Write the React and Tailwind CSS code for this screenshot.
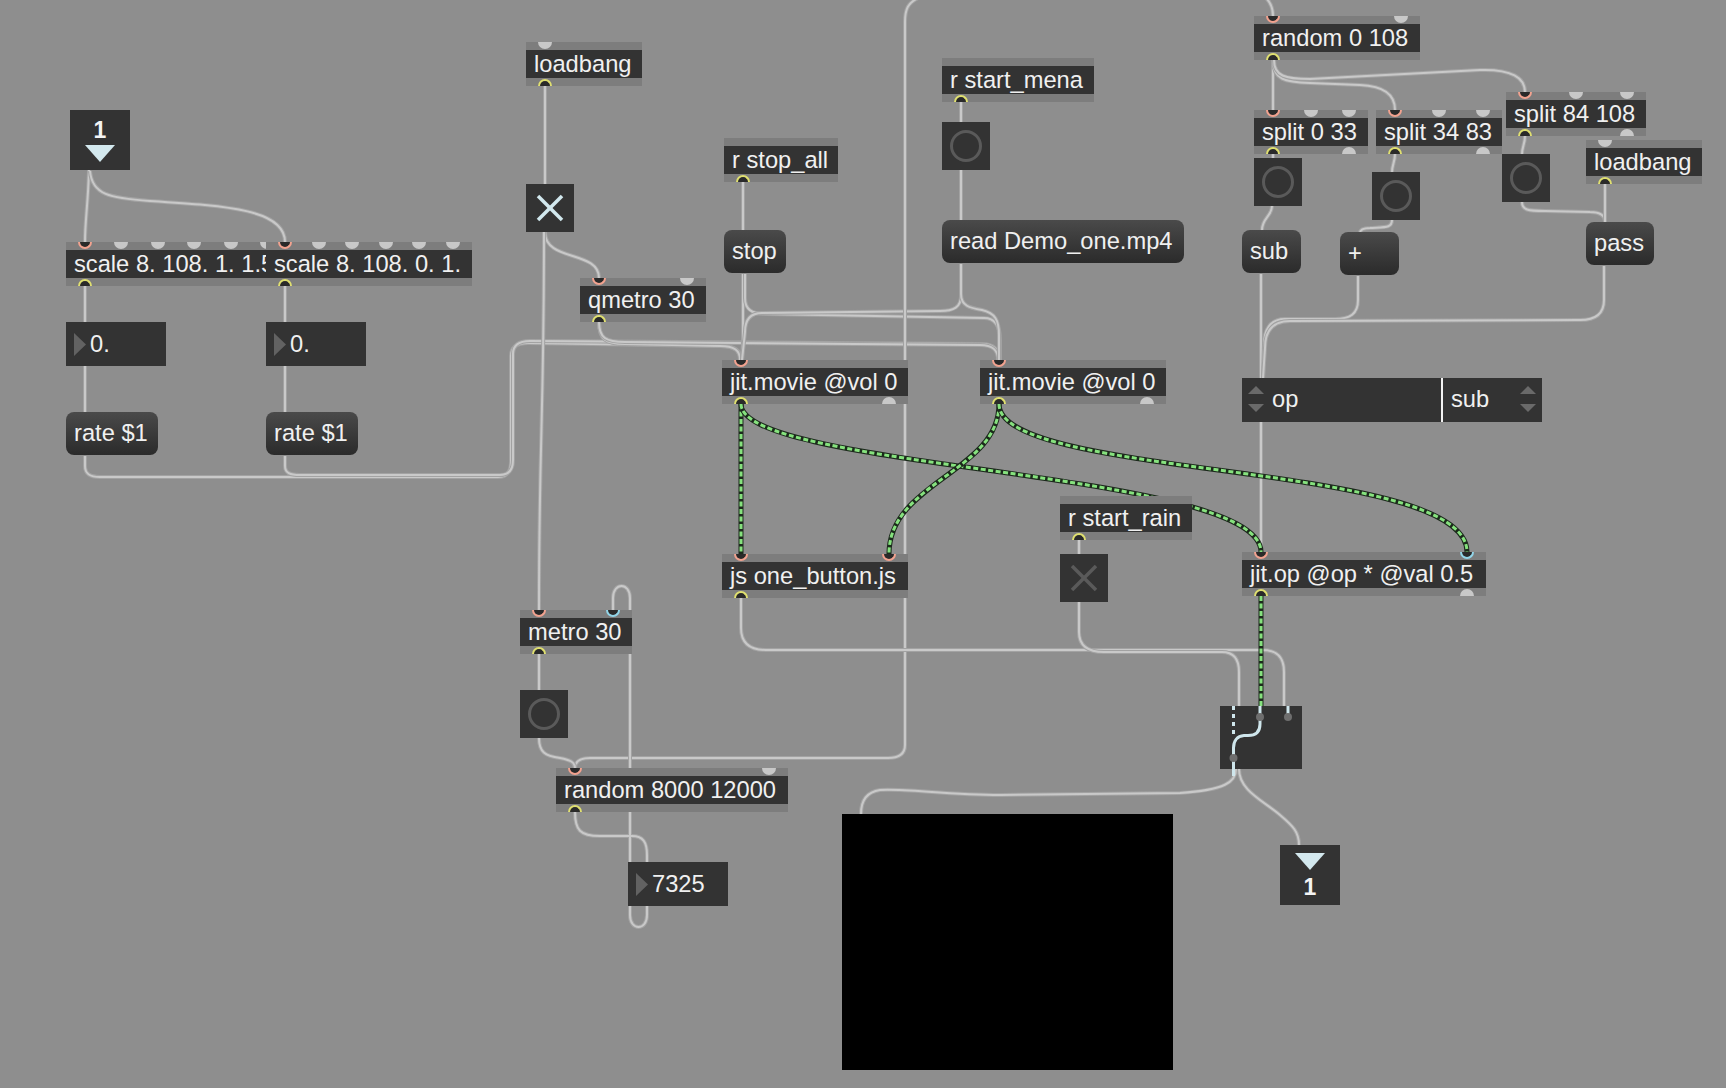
import React from "react";

const objects = [
  { t: "loadbang", x: 526, y: 42, w: 116, ins: ["g"], outs: ["y"] },
  { t: "qmetro 30", x: 580, y: 278, w: 126, ins: ["s", "g"], outs: ["y"] },
  { t: "r stop_all", x: 724, y: 138, w: 114, ins: [], outs: ["y"] },
  { t: "r start_mena", x: 942, y: 58, w: 152, ins: [], outs: ["y"] },
  { t: "random 0 108", x: 1254, y: 16, w: 166, ins: ["s", "g"], outs: ["y"] },
  { t: "split 0 33", x: 1254, y: 110, w: 114, ins: ["s", "g", "g"], outs: ["y", "g"] },
  { t: "split 34 83", x: 1376, y: 110, w: 126, ins: ["s", "g", "g"], outs: ["y", "g"] },
  { t: "split 84 108", x: 1506, y: 92, w: 140, ins: ["s", "g", "g"], outs: ["y", "g"] },
  { t: "loadbang", x: 1586, y: 140, w: 116, ins: ["g"], outs: ["y"] },
  { t: "scale 8. 108. 1. 1.5", x: 66, y: 242, w: 220, ins: ["s", "g", "g", "g", "g", "g"], outs: ["y"] },
  { t: "scale 8. 108. 0. 1.", x: 266, y: 242, w: 206, ins: ["s", "g", "g", "g", "g", "g"], outs: ["y"] },
  { t: "jit.movie @vol 0", x: 722, y: 360, w: 186, ins: ["s"], outs: ["y", "g"] },
  { t: "jit.movie @vol 0", x: 980, y: 360, w: 186, ins: ["s"], outs: ["y", "g"] },
  { t: "js one_button.js", x: 722, y: 554, w: 186, ins: ["s", "s"], outs: ["y"] },
  { t: "r start_rain", x: 1060, y: 496, w: 132, ins: [], outs: ["y"] },
  { t: "jit.op @op * @val 0.5", x: 1242, y: 552, w: 244, ins: ["s", "c"], outs: ["y", "g"] },
  { t: "metro 30", x: 520, y: 610, w: 112, ins: ["s", "c"], outs: ["y"] },
  { t: "random 8000 12000", x: 556, y: 768, w: 232, ins: ["s", "g"], outs: ["y"] },
];

const messages = [
  { t: "stop", x: 724, y: 230, w: 62 },
  { t: "read Demo_one.mp4", x: 942, y: 220, w: 242 },
  { t: "sub", x: 1242, y: 230, w: 59 },
  { t: "+", x: 1340, y: 232, w: 59 },
  { t: "pass", x: 1586, y: 222, w: 68 },
  { t: "rate $1", x: 66, y: 412, w: 92 },
  { t: "rate $1", x: 266, y: 412, w: 92 },
];

const numbers = [
  { t: "0.", x: 66, y: 322 },
  { t: "0.", x: 266, y: 322 },
  { t: "7325", x: 628, y: 862 },
];

const bangs = [
  { x: 942, y: 122 },
  { x: 1254, y: 158 },
  { x: 1372, y: 172 },
  { x: 1502, y: 154 },
  { x: 520, y: 690 },
];

const toggles = [
  { x: 526, y: 184, on: true },
  { x: 1060, y: 554, on: false },
];

const cords = [
  "M 89 170 C 88 205, 85 220, 85 242",
  "M 90 171 C 92 195, 110 198, 150 201 C 230 206, 285 210, 285 242",
  "M 85 286 L 85 322",
  "M 85 366 L 85 412",
  "M 285 286 L 285 322",
  "M 285 366 L 285 412",
  "M 85 456 L 85 466 C 85 474, 90 477, 100 477 L 498 477 C 507 477, 511 471, 511 462 L 511 356 C 511 347, 517 343, 528 343 L 722 346 C 735 346, 741 351, 741 360",
  "M 285 456 L 285 466 C 285 473, 290 475, 300 475 L 500 475 C 509 475, 513 469, 513 460 L 513 354 C 513 345, 519 341, 530 341 L 982 344 C 994 344, 999 350, 999 360",
  "M 545 86 L 545 184",
  "M 545 232 C 545 262, 599 250, 599 278",
  "M 544 232 C 544 420, 539 440, 539 610",
  "M 599 322 C 599 340, 606 344, 625 344 L 720 346 C 734 346, 740 350, 740 360",
  "M 599 322 C 599 338, 606 342, 625 342 L 980 345 C 993 345, 998 350, 998 360",
  "M 743 182 L 743 230",
  "M 743 274 L 743 340 C 743 350, 742 352, 742 360",
  "M 745 274 L 745 298 C 745 309, 751 314, 766 314 L 984 318 C 995 318, 1000 326, 1000 340 L 1000 360",
  "M 961 102 L 961 122",
  "M 961 170 L 961 220",
  "M 961 264 L 961 296 C 961 307, 954 311, 940 311 L 762 313 C 750 313, 745 320, 745 332 L 742 360",
  "M 961 264 L 961 294 C 961 306, 970 308, 982 310 C 995 313, 999 320, 999 335 L 999 360",
  "M 918 -2 C 908 3, 905 9, 905 22 L 905 745 C 905 754, 899 758, 888 758 L 590 758 C 580 758, 575 762, 575 768",
  "M 539 654 L 539 690",
  "M 539 738 C 539 752, 545 756, 560 758 C 570 760, 575 762, 575 768",
  "M 575 812 C 575 830, 580 836, 600 836 L 632 836 C 643 836, 647 842, 647 855 L 647 915 C 647 931, 630 931, 630 915 L 630 598 C 630 582, 613 582, 613 598 L 613 610",
  "M 741 598 L 741 628 C 741 643, 750 650, 766 650 L 1262 650 C 1276 650, 1284 656, 1284 672 L 1284 706",
  "M 1079 602 L 1079 632 C 1079 646, 1088 652, 1104 652 L 1222 652 C 1234 652, 1239 660, 1239 672 L 1239 706",
  "M 1079 540 L 1079 554",
  "M 1266 -2 C 1271 3, 1273 8, 1273 16",
  "M 1273 60 L 1273 110",
  "M 1273 60 C 1273 80, 1285 82, 1310 83 L 1360 85 C 1385 86, 1395 95, 1395 110",
  "M 1274 60 C 1274 76, 1285 79, 1310 79 L 1480 70 C 1512 69, 1525 78, 1525 92",
  "M 1273 154 L 1273 158",
  "M 1395 154 C 1395 162, 1392 165, 1392 172",
  "M 1525 136 C 1525 144, 1522 147, 1522 154",
  "M 1272 206 C 1272 216, 1262 218, 1262 230",
  "M 1392 220 C 1392 228, 1386 227, 1370 228 C 1362 228, 1360 230, 1360 233",
  "M 1522 202 C 1522 210, 1528 211, 1545 211 L 1590 212 C 1601 212, 1605 216, 1605 222",
  "M 1605 184 L 1605 222",
  "M 1261 274 L 1261 378",
  "M 1358 276 L 1358 300 C 1358 314, 1350 319, 1335 319 L 1285 319 C 1270 319, 1264 330, 1264 345 L 1263 378",
  "M 1604 266 L 1604 300 C 1604 314, 1596 320, 1580 320 L 1290 321 C 1272 321, 1265 332, 1265 348 L 1263 378",
  "M 1261 422 L 1261 552",
  "M 1236 769 C 1236 782, 1225 790, 1180 793 L 1000 795 C 950 795, 900 788, 880 790 C 866 792, 861 802, 861 814",
  "M 1239 769 C 1239 790, 1262 800, 1280 815 C 1293 826, 1299 832, 1299 845",
];

const matrixCords = [
  "M 741 404 L 741 554",
  "M 741 404 C 741 470, 1261 470, 1261 552",
  "M 999 404 C 999 472, 889 482, 889 554",
  "M 999 404 C 999 480, 1467 460, 1467 552",
  "M 1261 596 L 1261 706",
];

const ringClass = {
  s: "border-[#f2a28f]",
  c: "border-[#92d5e8]",
  y: "border-[#e0e070]",
};

function portX(o, i, n) {
  if (n === 1) return 19;
  return 19 + (i * (o.w - 38)) / (n - 1);
}

function Inlet({ x, k }) {
  if (k === "g")
    return <div className="absolute top-0 h-[7px] w-[14px] rounded-b-full bg-[#c8c8c8]" style={{ left: x - 7 }} />;
  return (
    <div
      className={`absolute top-0 h-[7px] w-[14px] rounded-b-full border-2 border-t-0 bg-[#2a2a2a] ${ringClass[k]}`}
      style={{ left: x - 7 }}
    />
  );
}

function Outlet({ x, k }) {
  if (k === "g")
    return <div className="absolute bottom-0 h-[7px] w-[14px] rounded-t-full bg-[#c8c8c8]" style={{ left: x - 7 }} />;
  return (
    <div
      className={`absolute bottom-0 h-[7px] w-[14px] rounded-t-full border-2 border-b-0 bg-[#2a2a2a] ${ringClass[k]}`}
      style={{ left: x - 7 }}
    />
  );
}

function Obj({ o }) {
  return (
    <div className="absolute flex flex-col" style={{ left: o.x, top: o.y, width: o.w, height: 44 }}>
      <div className="relative h-[8px] bg-[#7d7d7d]">
        {o.ins.map((k, i) => (
          <Inlet key={i} k={k} x={portX(o, i, o.ins.length)} />
        ))}
      </div>
      <div className="h-[28px] overflow-hidden whitespace-nowrap bg-[#333333] pl-[8px] text-[23.7px] leading-[28px] text-[#f0f0f0]">
        {o.t}
      </div>
      <div className="relative h-[8px] bg-[#7d7d7d]">
        {o.outs.map((k, i) => (
          <Outlet key={i} k={k} x={portX(o, i, o.outs.length)} />
        ))}
      </div>
    </div>
  );
}

function Message({ m }) {
  return (
    <div
      className="absolute h-[43px] whitespace-nowrap rounded-[8px] bg-linear-to-b from-[#4a4a4a] to-[#2b2b2b] pl-[8px] text-[23.7px] leading-[43px] text-[#f0f0f0]"
      style={{ left: m.x, top: m.y, width: m.w }}
    >
      {m.t}
    </div>
  );
}

function NumberBox({ n }) {
  return (
    <div
      className="absolute flex h-[44px] w-[100px] items-center bg-[#333333] text-[23.7px] text-[#f0f0f0]"
      style={{ left: n.x, top: n.y }}
    >
      <svg width="12" height="23" className="ml-[8px] shrink-0">
        <polygon points="0,0 12,11.5 0,23" fill="#626262" />
      </svg>
      <span className="ml-[4px] leading-[28px]">{n.t}</span>
    </div>
  );
}

function Bang({ b }) {
  return (
    <div className="absolute h-[48px] w-[48px] bg-[#333333]" style={{ left: b.x, top: b.y }}>
      <svg width="48" height="48">
        <circle cx="24" cy="24" r="14.5" fill="none" stroke="#5a5a5a" strokeWidth="3" />
      </svg>
    </div>
  );
}

function Toggle({ t }) {
  const c = t.on ? "#d2e8ee" : "#5a5a5a";
  return (
    <div className="absolute h-[48px] w-[48px] bg-[#333333]" style={{ left: t.x, top: t.y }}>
      <svg width="48" height="48">
        <line x1="12" y1="12" x2="36" y2="36" stroke={c} strokeWidth="3.5" />
        <line x1="36" y1="12" x2="12" y2="36" stroke={c} strokeWidth="3.5" />
      </svg>
    </div>
  );
}

function IoBox({ x, y, down }) {
  return (
    <div
      className="absolute flex h-[60px] w-[60px] flex-col items-center justify-center bg-[#333333] font-bold text-[23px] leading-[22px] text-[#f4f4f4]"
      style={{ left: x, top: y }}
    >
      {down ? (
        <>
          <span>1</span>
          <svg width="30" height="17" className="mt-[4px]">
            <polygon points="0,0 30,0 15,17" fill="#d3e8ee" />
          </svg>
        </>
      ) : (
        <>
          <svg width="30" height="17" className="mb-[6px]">
            <polygon points="0,0 30,0 15,17" fill="#d3e8ee" />
          </svg>
          <span>1</span>
        </>
      )}
    </div>
  );
}

function Arrows() {
  return (
    <svg width="16" height="28" className="shrink-0">
      <polygon points="0,8 8,0 16,8" fill="#6a6a6a" />
      <polygon points="0,18 16,18 8,26" fill="#6a6a6a" />
    </svg>
  );
}

function Umenu() {
  return (
    <div className="absolute flex h-[44px] w-[300px] items-center bg-[#333333] text-[23.7px] text-[#f0f0f0]" style={{ left: 1242, top: 378 }}>
      <div className="flex h-full w-[199px] items-center pl-[6px]">
        <Arrows />
        <span className="ml-[8px]">op</span>
      </div>
      <div className="h-full w-[2px] bg-[#f2f2f2]" />
      <div className="flex h-full flex-1 items-center justify-between pl-[8px] pr-[6px]">
        <span>sub</span>
        <Arrows />
      </div>
    </div>
  );
}

function GSwitch() {
  return (
    <div className="absolute h-[63px] w-[82px] bg-[#333333]" style={{ left: 1220, top: 706 }}>
      <svg width="82" height="63" className="overflow-visible">
        <line x1="13.5" y1="0" x2="13.5" y2="30" stroke="#cfe6ec" strokeWidth="3" strokeDasharray="4 4" />
        <line x1="40" y1="0" x2="40" y2="11" stroke="#cfe6ec" strokeWidth="3" />
        <line x1="68" y1="0" x2="68" y2="11" stroke="#cfe6ec" strokeWidth="3" />
        <path d="M 40 11 L 40 18 C 40 26, 36 29.5, 28 29.5 L 24 29.5 C 17 30, 13.5 35, 13.5 42 L 13.5 70" fill="none" stroke="#cfe6ec" strokeWidth="3" />
        <circle cx="40" cy="11" r="4" fill="#6e6e6e" />
        <circle cx="68" cy="11" r="4" fill="#6e6e6e" />
        <circle cx="13.5" cy="52" r="4" fill="#6e6e6e" />
      </svg>
    </div>
  );
}

export default function App() {
  return (
    <div className="relative h-[1088px] w-[1726px] overflow-hidden bg-[#8e8e8e] font-['Liberation_Sans',Arial,sans-serif]">
      <svg className="absolute left-0 top-0" width="1726" height="1088">
        {cords.map((d, i) => (
          <g key={i}>
            <path d={d} fill="none" stroke="#a2a2a2" strokeWidth="4" />
            <path d={d} fill="none" stroke="#c9c9c9" strokeWidth="2" />
          </g>
        ))}
        {matrixCords.map((d, i) => (
          <g key={"m" + i}>
            <path d={d} fill="none" stroke="#1c2a1c" strokeWidth="5" />
            <path d={d} fill="none" stroke="#86e27e" strokeWidth="3" strokeDasharray="5 2.5" />
          </g>
        ))}
      </svg>

      {objects.map((o, i) => (
        <Obj key={i} o={o} />
      ))}
      {messages.map((m, i) => (
        <Message key={i} m={m} />
      ))}
      {numbers.map((n, i) => (
        <NumberBox key={i} n={n} />
      ))}
      {bangs.map((b, i) => (
        <Bang key={i} b={b} />
      ))}
      {toggles.map((t, i) => (
        <Toggle key={i} t={t} />
      ))}
      <IoBox x={70} y={110} down />
      <IoBox x={1280} y={845} />
      <Umenu />
      <GSwitch />
      <div className="absolute h-[256px] w-[331px] bg-black" style={{ left: 842, top: 814 }} />
    </div>
  );
}
